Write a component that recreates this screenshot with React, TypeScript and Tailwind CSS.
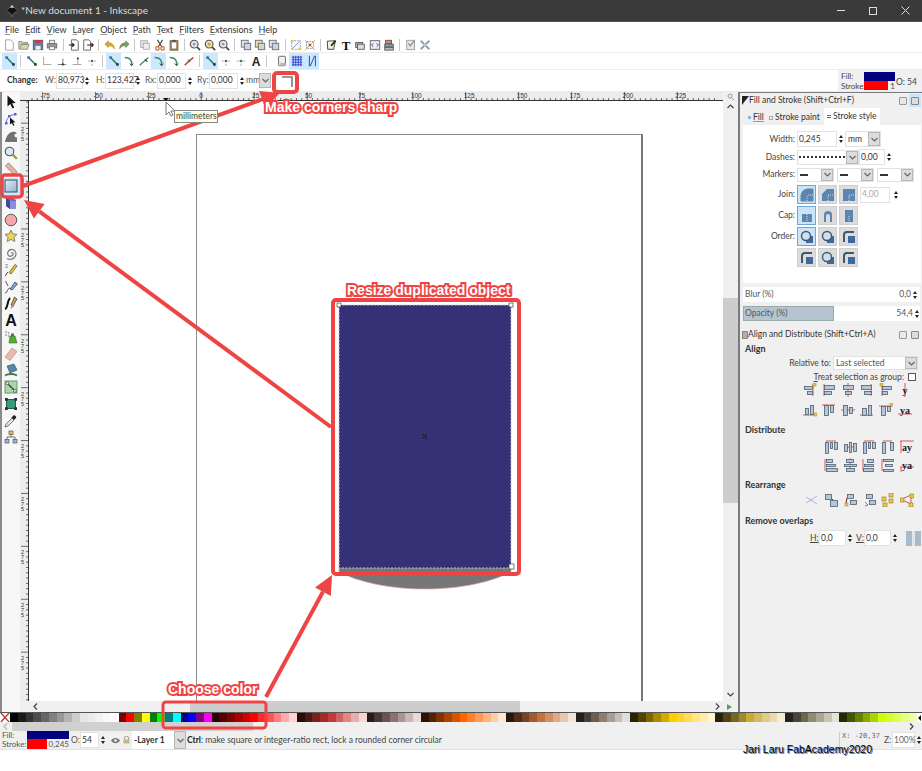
import type { ReactNode } from 'react'

const Svg = ({ s = 14, children }: { s?: number; children: ReactNode }) => (
  <svg width={s} height={s} viewBox="0 0 14 14" className="shrink-0">{children}</svg>
)

const Chevron = ({ dir = 'down', c = '#666' }: { dir?: 'down' | 'up' | 'left' | 'right'; c?: string }) => {
  const d = { down: 'M1.5 3 L4.5 6 L7.5 3', up: 'M1.5 6 L4.5 3 L7.5 6', left: 'M6 1.5 L3 4.5 L6 7.5', right: 'M3 1.5 L6 4.5 L3 7.5' }[dir]
  return <svg width="9" height="9" viewBox="0 0 9 9" className="shrink-0"><path d={d} fill="none" stroke={c} strokeWidth="1.2" /></svg>
}

// file / edit toolbar icons
const tb: Record<string, ReactNode> = {
  new: <path d="M3 1h6l3 3v9H3z" fill="#fff" stroke="#999" />,
  open: <path d="M1 12V3h4l1 1h5v2H4l-2 6h9l2-6H4" fill="#d9d4a8" stroke="#888" />,
  save: <g><rect x="1.5" y="1.5" width="11" height="11" fill="#5b7fb0" stroke="#555" /><rect x="3.5" y="1.5" width="7" height="3" fill="#d33" /><rect x="4" y="8" width="6" height="4.5" fill="#eee" /></g>,
  print: <g><rect x="4" y="1.5" width="6" height="4" fill="#eee" stroke="#777" /><rect x="1.5" y="5.5" width="11" height="5" fill="#999" stroke="#666" /><rect x="4" y="9" width="6" height="3.5" fill="#fff" stroke="#777" /></g>,
  imp: <g><path d="M4 1h6l2 2v10H4z" fill="#fff" stroke="#555" /><path d="M1 7h6M5 5l2 2-2 2" fill="none" stroke="#222" strokeWidth="1.4" /></g>,
  exp: <g><path d="M2 1h6l2 2v10H2z" fill="#fff" stroke="#555" /><path d="M6 7h7M11 5l2 2-2 2" fill="none" stroke="#222" strokeWidth="1.4" /></g>,
  undo: <path d="M1 6l4-4v2.500c4 0 7 2 7 7-1.500-3-4-3.500-7-3.500V10z" fill="#e0a92e" stroke="#a67a12" strokeWidth=".6" />,
  redo: <path d="M13 6L9 2v2.500c-4 0-7 2-7 7 1.500-3 4-3.500 7-3.500V10z" fill="#7f9a63" stroke="#5c7444" strokeWidth=".6" />,
  dup: <g><rect x="2" y="2" width="8" height="8" fill="#e5e5e5" stroke="#aaa" /><rect x="5" y="5" width="7" height="7" fill="#eee" stroke="#aaa" /></g>,
  cut: <g><path d="M4 1l5 8M10 1L5 9" stroke="#444" strokeWidth="1.3" /><circle cx="4" cy="11" r="2" fill="none" stroke="#c46a2b" strokeWidth="1.4" /><circle cx="10" cy="11" r="2" fill="none" stroke="#c46a2b" strokeWidth="1.4" /></g>,
  paste: <g><rect x="2.500" y="2" width="9" height="11" fill="#b58a45" stroke="#555" /><rect x="4.500" y="4" width="5" height="7" fill="#fff" /><rect x="5" y="1" width="4" height="2.500" fill="#555" /></g>,
  zoom: <g><circle cx="6" cy="6" r="4.500" fill="#e4e8ec" stroke="#555" strokeWidth="1.3" /><circle cx="6" cy="6" r="1.500" fill="#999" /><path d="M9.500 9.500L13 13" stroke="#444" strokeWidth="2" /></g>,
  zoom2: <g><circle cx="6" cy="6" r="4.500" fill="#efe7c4" stroke="#555" strokeWidth="1.3" /><circle cx="6" cy="6" r="2" fill="#c9a64a" /><path d="M9.500 9.500L13 13" stroke="#444" strokeWidth="2" /></g>,
  pages: <g><rect x="1.500" y="1.500" width="8" height="8" fill="#dde6ee" stroke="#667" /><rect x="5" y="5" width="7.500" height="7.500" fill="#c9d6e2" stroke="#667" /></g>,
  pages2: <g><rect x="1.500" y="1.500" width="8" height="8" fill="#e8dfa0" stroke="#667" /><rect x="5" y="5" width="7.500" height="7.500" fill="#cfd8c0" stroke="#667" /></g>,
  grp: <g><rect x="2" y="2" width="10" height="10" fill="none" stroke="#889" strokeDasharray="2 1" /><path d="M3 11L11 3" stroke="#5a8ac0" /><rect x="1" y="1" width="3" height="3" fill="#ddc95a" /><rect x="10" y="10" width="3" height="3" fill="#ddc95a" /></g>,
  grp2: <g><rect x="3" y="3" width="8" height="8" fill="none" stroke="#889" strokeDasharray="2 1" /><path d="M1 1l12 12M13 1L1 13" stroke="#c9a64a" /><circle cx="7" cy="7" r="1.500" fill="#c33" /></g>,
  xml: <g><path d="M2 12L1.500 2.500 11 2 9 12z" fill="#f4f1dc" stroke="#333" /><path d="M11 2L6 8" stroke="#222" strokeWidth="2" /></g>,
  text: <text x="7" y="12.500" textAnchor="middle" fontSize="15" fontWeight="700" fontFamily="Liberation Serif, serif" fill="#111">T</text>,
  layers: <g><rect x="2" y="4" width="8" height="6" fill="#bbb" stroke="#555" /><rect x="4" y="6" width="8" height="6" fill="#ddd" stroke="#555" /></g>,
  code: <g><rect x="1.500" y="2" width="11" height="10" fill="#eef" stroke="#556" /><path d="M5 5L3 7l2 2M9 5l2 2-2 2" fill="none" stroke="#333" /></g>,
  objs: <g><rect x="3" y="1.500" width="7" height="4" fill="#d38b6a" stroke="#555" /><rect x="2" y="6" width="10" height="3" fill="#8aa4c0" stroke="#555" /><rect x="2" y="10" width="10" height="3" fill="#bbb" stroke="#555" /></g>,
  doc: <g><rect x="2" y="1.500" width="9" height="11" fill="#e6e6e6" stroke="#999" /><path d="M4 5l2 3 5-6" fill="none" stroke="#6a9a7a" strokeWidth="1.300" /></g>,
  tools: <g><path d="M2 2l10 10M12 2L2 12" stroke="#8aa0b4" strokeWidth="2.200" /><circle cx="7" cy="7" r="2" fill="#bcc8d2" /></g>,
}

// snap bar icons
const sn = (kind: string): ReactNode => {
  if (kind === 'node') return <g><path d="M3 3l8 8" stroke="#2b7a55" strokeWidth="1.800" /><rect x="1.500" y="1.500" width="3" height="3" fill="#3a6fb0" /><rect x="9.500" y="9.500" width="3" height="3" fill="#333" /></g>
  if (kind === 'corner') return <path d="M3 2v9h9" fill="none" stroke="#a8a8a8" strokeWidth="1.200" />
  if (kind === 'cross') return <g><path d="M2 11h10M8 4v7" fill="none" stroke="#888" strokeWidth="1.200" /><circle cx="8" cy="11" r="1.300" fill="#333" /></g>
  if (kind === 'up') return <g><path d="M2 11h10M8 3v8" fill="none" stroke="#aaa" strokeWidth="1.200" /><circle cx="8" cy="4" r="1.200" fill="#333" /></g>
  if (kind === 'dot') return <g><path d="M2 7h3M9 7h3M7 10v3" stroke="#aaa" strokeWidth="1.100" /><circle cx="7" cy="7" r="1.500" fill="#3a7a4a" /></g>
  if (kind === 'curve') return <g><path d="M2 3c6 0 9 3 8 9" fill="none" stroke="#3b8b5b" strokeWidth="1.700" /><path d="M8 10l2 2.500L12 10" fill="none" stroke="#333" /></g>
  if (kind === 'line') return <g><path d="M2 12L12 3" stroke="#3b8b5b" strokeWidth="1.500" /><path d="M8 5l3 3" stroke="#333" strokeWidth="1.200" /></g>
  if (kind === 'bez') return <g><path d="M2 12L7 7l5-4" stroke="#c33" strokeWidth="1.700" fill="none" /><rect x="5.500" y="5.500" width="3" height="3" fill="#3b8b5b" /></g>
  if (kind === 'A') return <text x="7" y="12.500" textAnchor="middle" fontSize="14" fontWeight="700" fontFamily="Liberation Sans, sans-serif" fill="#222">A</text>
  if (kind === 'page') return <g><rect x="3" y="1.500" width="8" height="11" rx="1" fill="#f2f2f2" stroke="#555" /><rect x="5" y="9" width="6" height="3.500" fill="#bbb" /></g>
  if (kind === 'grid') return <path d="M2.500 1v12M5.500 1v12M8.500 1v12M11.500 1v12M1 2.500h12M1 5.500h12M1 8.500h12M1 11.500h12" stroke="#2638d0" strokeWidth="1" />
  return <g><path d="M4 1v12M11 1v12" stroke="#2f64c8" strokeWidth="1.300" /><path d="M5 13L10 1" stroke="#2f64c8" strokeWidth="1.300" /></g>
}

// toolbox icons, drawn in 14-unit boxes
const toolIcons: ReactNode[] = [
  <path d="M3.500 .5v11l2.800-2.500 2.200 4.500 1.800-.9-2.200-4.300 3.600-.3z" fill="#111" />,
  <g><path d="M2 11C3 6 5 3 11 2.500" fill="none" stroke="#6a6af0" strokeWidth="1" /><rect x="1" y="10" width="2.500" height="2.500" fill="#5b5bf0" /><rect x="10" y="1" width="2.500" height="2.500" fill="#5b5bf0" /><rect x="4" y="3" width="2.500" height="2.500" fill="#5b5bf0" /><path d="M6 5.500v7l1.800-1.600 1.500 2.900 1.200-.6-1.500-2.800 2.400-.2z" fill="#111" /></g>,
  <path d="M1 13c1-5 3-9 7-10 2-.5 4 0 5 1.500-2 0-3 1-2.500 2.500.4 1 1.500 1.500 2.500 1.500v4.500z" fill="#6f7470" />,
  <g><circle cx="5.500" cy="5.500" r="4.300" fill="#d7e7f5" stroke="#555" strokeWidth="1.100" /><path d="M8.800 8.800l4 4" stroke="#b68a3a" strokeWidth="2.300" /></g>,
  <path d="M4.500 .8l8.700 9-3 3.200L1.500 4z" fill="#e8b39a" stroke="#777" strokeWidth=".7" />,
  <g><defs><linearGradient id="rectg" x1="0" y1="0" x2="1" y2="1"><stop offset="0" stopColor="#e6eef6" /><stop offset="1" stopColor="#8fb0d0" /></linearGradient></defs><rect x="1" y="1" width="12" height="12" fill="url(#rectg)" stroke="#3c4c5c" strokeWidth="1" /></g>,
  <g><path d="M2 1h6l4 3v9H6l-4-3z" fill="#6a6ac0" /><path d="M6 5h6v8H6z" fill="#8d8de0" /><path d="M2 1l4 4v8l-4-3z" fill="#46469a" /></g>,
  <circle cx="7" cy="7" r="5.800" fill="#f4a6ac" stroke="#5b5b5b" strokeWidth="1" />,
  <path d="M7 1l1.800 3.900 4.200.5-3.100 2.900.9 4.200L7 10.400l-3.800 2.100.9-4.200L1 5.400l4.200-.5z" fill="#efd84f" stroke="#7a8a6a" strokeWidth="1" />,
  <path d="M7 7c1-1 2.500 0 2 1.500S6 11 4.500 9.500 3.500 4 7 3.500s6 3 4.500 6.500-6 4-8.500 2.500" fill="none" stroke="#7f7f7f" strokeWidth="1.300" />,
  <g><path d="M1 13c2-1 1-3 3-4" fill="none" stroke="#555" /><path d="M5 9.500l6-8 2 1.500-6 8z" fill="#ecc233" stroke="#444" strokeWidth=".7" /><text x="1" y="5" fontSize="5" fill="#555">2</text></g>,
  <g><path d="M1 13c3 0 2-5 5-5" fill="none" stroke="#555" /><path d="M6 9l5-7 2.500 2-5.500 6z" fill="#7aa8d8" stroke="#333" strokeWidth=".7" /><path d="M1.500 1L4 6" stroke="#555" /></g>,
  <g><path d="M1 13c3-.5 2-8 5-11" fill="none" stroke="#111" strokeWidth="2" /><path d="M7 9l3.500-8L13 3l-4 7z" fill="#c9a64a" stroke="#333" strokeWidth=".7" /><path d="M7 12l3-3" stroke="#8c7ad0" strokeWidth="1.400" /></g>,
  <text x="7" y="13" textAnchor="middle" fontSize="16" fontWeight="700" fontFamily="Liberation Sans, sans-serif" fill="#111">A</text>,
  <g><path d="M6 6h5l2 7H5z" fill="#58a83a" stroke="#3b6e28" strokeWidth=".6" /><rect x="7" y="3.500" width="3" height="2.500" fill="#666" /><circle cx="2" cy="2" r=".8" fill="#777" /><circle cx="4.500" cy="3" r=".8" fill="#777" /><circle cx="2" cy="5" r=".8" fill="#777" /><circle cx="4.500" cy="6" r=".8" fill="#777" /></g>,
  <path d="M8 1l5 3.500-7 9L1 10z" fill="#f0b7a4" stroke="#999" strokeWidth=".7" />,
  <g><path d="M3 3l7-2 3 6-7 3z" fill="#4f88b0" stroke="#345" strokeWidth=".6" /><path d="M1 12.500c3-2 9-2 12 0" stroke="#3f7a45" strokeWidth="1.800" fill="none" /></g>,
  <g><rect x="1" y="1" width="12" height="12" fill="#a8d8a8" stroke="#6a9a6a" /><path d="M3 3l8 8" stroke="#333" strokeWidth="1.100" /><rect x="2" y="2" width="2.500" height="2.500" fill="#fff" stroke="#333" strokeWidth=".5" /><rect x="9.500" y="9.500" width="2.500" height="2.500" fill="#fff" stroke="#333" strokeWidth=".5" /></g>,
  <g><rect x="2.500" y="2.500" width="9" height="9" fill="#3b9a7a" stroke="#2a5a50" /><rect x="1" y="1" width="2.800" height="2.800" fill="#234" /><rect x="10.200" y="1" width="2.800" height="2.800" fill="#234" /><rect x="1" y="10.200" width="2.800" height="2.800" fill="#234" /><rect x="10.200" y="10.200" width="2.800" height="2.800" fill="#234" /></g>,
  <g><path d="M1 13l1-3 6-6 2 2-6 6z" fill="#dfe8ef" stroke="#555" strokeWidth=".8" /><path d="M7.500 3.500l2-2c1-1 3.500 1.500 2.500 2.500l-2 2z" fill="#222" /></g>,
  <g><rect x="5" y="1" width="4" height="3.500" fill="#f0c040" stroke="#555" strokeWidth=".7" /><rect x="1" y="9.500" width="4" height="3.500" fill="#9ab8d8" stroke="#555" strokeWidth=".7" /><rect x="9" y="9.500" width="4" height="3.500" fill="#9ab8d8" stroke="#555" strokeWidth=".7" /><path d="M7 4.500V7M3 9.500V7h8v2.500" fill="none" stroke="#555" strokeWidth=".8" /></g>,
]

// align & distribute icons: [x,y,w,h] bars, [x1,y1,x2,y2] red lines and yellow anchors
type Mini = { b: number[][]; l?: number[][]; y?: number[]; t?: string; ys?: number[][]; c?: string }
const MiniIcon = ({ m }: { m: Mini }) => (
  <Svg>
    {m.l?.map((v, i) => <line key={i} x1={v[0]} y1={v[1]} x2={v[2]} y2={v[3]} stroke={m.c ?? '#e05555'} strokeWidth="1" />)}
    {m.b.map((v, i) => <rect key={i} x={v[0] + 0.5} y={v[1] + 0.5} width={v[2]} height={v[3]} fill="#b4c6d8" stroke="#4f5f6f" strokeWidth=".8" />)}
    {m.y && <rect x={m.y[0]} y={m.y[1]} width="3" height="3" fill="#f0c83c" stroke="#a0801c" strokeWidth=".5" />}
    {m.ys?.map((v, i) => <rect key={i} x={v[0]} y={v[1]} width="4" height="4" fill="#f0c83c" stroke="#8a7a2c" strokeWidth=".6" />)}
    {m.t && <text x="7" y="11" textAnchor="middle" fontSize="10" fontWeight="700" fontFamily="Liberation Serif, serif" fill="#222">{m.t}</text>}
  </Svg>
)

const alignRow1: Mini[] = [
  { b: [[1, 3, 8, 3], [4, 8, 5, 3]], l: [[10, 1, 10, 13]], y: [10, 0] },
  { b: [[2, 2, 10, 4], [2, 8, 7, 3]], l: [[2, 1, 2, 13]] },
  { b: [[2, 2, 10, 4], [4, 8, 6, 3]], l: [[7, 0, 7, 14]] },
  { b: [[1, 2, 10, 4], [4, 8, 7, 3]], l: [[11, 1, 11, 13]] },
  { b: [[3, 3, 9, 3], [3, 8, 5, 3]], l: [[3, 1, 3, 13]], y: [1, 0] },
  { b: [], t: 'y', l: [[7, 0, 7, 14]] },
]
const alignRow2: Mini[] = [
  { b: [[2, 5, 3, 6], [7, 2, 3, 9]], l: [[0, 12, 13, 12]], y: [11, 10] },
  { b: [[2, 2, 4, 10], [8, 2, 3, 7]], l: [[0, 2, 13, 2]] },
  { b: [[2, 2, 4, 10], [8, 4, 3, 6]], l: [[0, 7, 14, 7]] },
  { b: [[2, 5, 4, 7], [8, 2, 3, 10]], l: [[0, 12, 13, 12]] },
  { b: [[2, 3, 4, 9], [8, 3, 3, 5]], l: [[0, 3, 13, 3]], y: [11, 0] },
  { b: [], t: 'ya', l: [[0, 11, 14, 11]] },
]
const distRow1: Mini[] = [
  { b: [[1, 2, 3, 11], [6, 2, 2, 6], [10, 2, 3, 7]], l: [[2, 1, 12, 1]] },
  { b: [[1, 4, 3, 7], [6, 2, 2, 10], [10, 3, 3, 8]], l: [[2, 7, 12, 7]] },
  { b: [[1, 2, 3, 11], [6, 2, 2, 6], [10, 2, 3, 6]], l: [[2, 1, 12, 1]] },
  { b: [[1, 2, 3, 11], [9, 2, 3, 8]], l: [[2, 1, 11, 1]] },
  { b: [], t: 'ay', l: [[0, 1, 14, 1], [1, 1, 1, 13]] },
]
const distRow2: Mini[] = [
  { b: [[2, 1, 6, 3], [2, 6, 9, 2], [2, 10, 11, 3]], l: [[1, 1, 1, 13]] },
  { b: [[3, 1, 7, 3], [1, 6, 12, 2], [3, 10, 8, 3]], l: [[7, 0, 7, 14]] },
  { b: [[5, 1, 6, 3], [2, 6, 9, 2], [1, 10, 10, 3]], l: [[1, 1, 1, 13]] },
  { b: [[2, 1, 10, 2], [4, 6, 7, 2], [2, 11, 10, 2]], l: [[1, 1, 1, 13]] },
  { b: [], t: 'ya', l: [[0, 9, 14, 9], [1, 9, 1, 14]] },
]
const rearrange: Mini[] = [
  { b: [], c: '#a9b4e6', l: [[1, 4, 6, 7], [6, 7, 1, 10], [6, 7, 12, 3], [6, 7, 12, 11]] },
  { b: [[1, 1, 6, 5], [6, 7, 7, 6]], l: [[6, 4, 9, 7]], c: '#333' },
  { b: [[4, 1, 6, 4], [7, 7, 6, 4]], y: [2, 10], l: [[4, 5, 3, 10]], c: '#7a1a1a' },
  { b: [[4, 1, 6, 4], [7, 7, 6, 4]], l: [[3, 9, 6, 12], [6, 12, 3, 13]] },
  { b: [], ys: [[8, 0], [1, 4], [8, 6], [2, 10]] },
  { b: [], ys: [[0, 5], [10, 1], [9, 10]], l: [[2, 6, 11, 2], [2, 7, 11, 11], [11, 3, 11, 11]] },
]

const reds = ['000000', '1a1a1a', '333333', '4d4d4d', '666666', '808080', '999999', 'b3b3b3', 'cccccc', 'e6e6e6', 'ececec', 'f2f2f2', 'f9f9f9', 'ffffff', '800000', 'ff0000', '808000', 'ffff00', '008000', '00ff00', '008080', '00ffff', '000080', '0000ff', '800080', 'ff00ff', '2b0000', '550000', '800000', 'aa0000', 'd40000', 'ff0000', 'ff2a2a', 'ff5555', 'ff8080', 'ffaaaa', 'ffd5d5', '280b0b', '501616', '782121', 'a02c2c', 'c83737', 'd35f5f', 'de8787', 'e9afaf', 'f4d7d7', '241c1c', '483737', '6c5353', '916f6f', 'ac9393', 'c8b7b7', 'e3dbdb', '2b1100', '552200', '803300', 'aa4400', 'd45500', 'ff6600', 'ff7f2a', 'ff9955', 'ffb380', 'ffccaa', 'ffe6d5', '28170b', '502d16', '784421', 'a05a2c', 'c87137', 'd38d5f', 'deaa87', 'e9c6af', 'f4e3d7', '241f1c', '483e37', '6c5d53', '917c6f', 'ac9d93', 'c8beb7', 'e3dedb', '2b2200', '554400', '806600', 'aa8800', 'd4aa00', 'ffcc00', 'ffd42a', 'ffdd55', 'ffe680', 'ffeeaa', 'fff6d5', '28220b', '504416', '786721', 'a0892c', 'c8ab37', 'd3bc5f', 'decd87', 'e9ddaf', 'f4eed7', '24221c', '484537', '6c6753', '918a6f', 'aca793', 'c8c4b7', 'e3e2db', '222b00', '445500', '668000', '88aa00', 'aad400', 'ccff00', 'd4ff2a', 'ddff55', 'e5ff80', 'eeffaa']

const Sep = () => <div className="w-px h-[12px] bg-[#c8c8c8] mx-[3px] shrink-0" />

const Spin = () => (
  <div className="flex flex-col items-center justify-center w-[7px] shrink-0 gap-[2px]">
    <div className="w-0 h-0 border-x-[2.5px] border-x-transparent border-b-[3px] border-b-[#222]" />
    <div className="w-0 h-0 border-x-[2.5px] border-x-transparent border-t-[3px] border-t-[#222]" />
  </div>
)

const Field = ({ v, w, c = 'text-[#333]' }: { v: string; w: string; c?: string }) => (
  <div className={`${w} ${c} h-[16px] bg-white border border-[#e2e2e2] flex items-center pl-[1px] text-[8.5px] shrink-0 whitespace-nowrap`}>{v}</div>
)

const ChevBox = () => (
  <div className="w-[12px] h-full bg-[#dcdcdc] border border-[#b8b8b8] flex items-center justify-center shrink-0"><Chevron /></div>
)

const Marker = () => (
  <div className="w-[37px] h-[14px] flex items-center bg-white border border-[#e2e2e2]">
    <div className="w-[8px] h-[2px] bg-[#333] ml-[2px]" />
    <div className="ml-auto h-full"><ChevBox /></div>
  </div>
)

const JoinBtn = ({ on, d }: { on?: boolean; d: ReactNode }) => (
  <div className={`w-[19px] h-[19px] flex items-center justify-center border ${on ? 'bg-[#cce4f7] border-[#6fa8dc]' : 'bg-[#dcdcdc] border-[#cfcfcf]'}`}>
    <Svg>{d}</Svg>
  </div>
)

const joinD = {
  round: <g><path d="M1 13V8a7 7 0 0 1 7-7h5v12z" fill="#5b86b4" stroke="#5b86b4" /><path d="M7 13V9a2 2 0 0 1 2-2h4" fill="none" stroke="#ddd" strokeDasharray="1 1" /></g>,
  bevel: <g><path d="M1 13V6l5-5h7v12z" fill="#5b86b4" /><path d="M7 13V7h6" fill="none" stroke="#ddd" strokeDasharray="1 1" /></g>,
  miter: <g><path d="M1 13V1h12v12z" fill="#5b86b4" /><path d="M7 13V7h6" fill="none" stroke="#ddd" strokeDasharray="1 1" /></g>,
  butt: <g><rect x="2" y="5" width="10" height="8" fill="#5b86b4" /><path d="M7 5v8" stroke="#ddd" strokeDasharray="1 1" /></g>,
  rcap: <path d="M3 13V6a4 4 0 0 1 8 0v7h-2V7a2 2 0 0 0-4 0v6z" fill="#5b86b4" />,
  scap: <g><rect x="3" y="1" width="8" height="12" fill="#5b86b4" /><path d="M7 7v6" stroke="#ddd" strokeDasharray="1 1" /></g>,
}
const order = (a: string, b: string, c: string) => (
  <g>
    <rect x="6" y="6" width="7" height="7" fill={c} />
    <circle cx="6" cy="6" r="4.500" fill={a} stroke={b} strokeWidth="1.400" />
  </g>
)
const orderOut = <g><path d="M2 12V5a3 3 0 0 1 3-3h7" fill="none" stroke="#44566a" strokeWidth="2" /><rect x="6" y="6" width="7" height="7" fill="#3d6a9e" /></g>

const PanelHead = ({ t, active, glyph }: { t: string; active?: boolean; glyph: ReactNode }) => (
  <div className="flex items-center h-[15px] text-[8.5px] text-[#333]">
    {glyph}
    <span className="whitespace-nowrap">{t}</span>
    <div className="ml-auto flex items-center gap-[2px]">
      <div className="w-[8px] h-[8px] border border-[#999] bg-[#e8e8e8] rounded-[1px]" />
      <div className={`w-[12px] h-[13px] flex items-center justify-center ${active ? 'bg-[#cce4f7]' : ''}`}>
        <div className="w-[8px] h-[8px] border border-[#888] bg-[#ddd] rounded-[1px]" />
      </div>
    </div>
  </div>
)

const Labeled = ({ t, children, h = 'h-[18px]' }: { t: string; children: ReactNode; h?: string }) => (
  <div className={`flex items-center ${h}`}>
    <div className="w-[52px] text-right text-[8.5px] text-[#444] shrink-0">{t}</div>
    <div className="ml-[2px] flex items-center">{children}</div>
  </div>
)

const ToolRow = ({ items }: { items: (string | null)[] }) => (
  <div className="flex items-center h-[15px] pl-[2px] border-b border-[#ececec]">
    {items.map((k, i) => k ? <div key={i} className="w-[14.4px] flex justify-center"><Svg s={12}>{tb[k]}</Svg></div> : <Sep key={i} />)}
  </div>
)

const SnapBtn = ({ k, on }: { k: string; on?: boolean }) => (
  <div className={`w-[15px] h-[16px] flex items-center justify-center shrink-0 ${on ? 'bg-[#cce8ff]' : ''}`}><Svg s={12}>{sn(k)}</Svg></div>
)

// ruler drawings
const HRuler = () => {
  const labels = ['-75', '-50', '-25', '0', '25', '50', '75', '100', '125', '150', '175', '200', '225']
  const ticks = Array.from({ length: 130 }, (_, i) => 12 + i * 5.29)
  return (
    <svg width="703" height="9" className="block">
      <rect width="703" height="9" fill="#ececec" />
      {ticks.map((x, i) => <line key={i} x1={x} x2={x} y1={i % 10 === 2 ? 0 : 6} y2="9" stroke="#333" strokeWidth=".7" />)}
      {labels.map((l, i) => <text key={l} x={20.500 + i * 52.9} y="6" fontSize="6.500" fill="#333" fontFamily="Liberation Sans, sans-serif">{l}</text>)}
      <line x1="0" x2="703" y1="8.600" y2="8.600" stroke="#222" />
      <path d="M143 6h6l-3 3z" fill="#111" />
    </svg>
  )
}
const VRuler = () => {
  const ticks = Array.from({ length: 116 }, (_, i) => i * 5.29 + 1)
  const labels = ['2', '7', '5']
  return (
    <svg width="9" height="600" className="block">
      <rect width="9" height="600" fill="#ececec" />
      {ticks.map((y, i) => <line key={i} y1={y} y2={y} x1={i % 10 === 4 ? 1 : 6} x2="9" stroke="#333" strokeWidth=".7" />)}
      {Array.from({ length: 11 }, (_, i) => (
        <g key={i}>
          {labels.map((c, j) => <text key={j} x="1" y={30 + i * 52.9 + j * 5} fontSize="5.500" fill="#333" fontFamily="Liberation Sans, sans-serif">{c}</text>)}
        </g>
      ))}
      <line x1="8.600" x2="8.600" y1="0" y2="600" stroke="#222" />
    </svg>
  )
}

const Arrow = ({ x1, y1, x2, y2, w = 4, hl = 19, hw = 9 }: { x1: number; y1: number; x2: number; y2: number; w?: number; hl?: number; hw?: number }) => {
  const a = Math.atan2(y2 - y1, x2 - x1)
  const bx = x2 - Math.cos(a) * hl
  const by = y2 - Math.sin(a) * hl
  const nx = -Math.sin(a) * hw
  const ny = Math.cos(a) * hw
  return (
    <g>
      <line x1={x1} y1={y1} x2={bx} y2={by} stroke="#ef4444" strokeWidth={w} />
      <polygon points={`${x2},${y2} ${bx + nx},${by + ny} ${bx - nx},${by - ny}`} fill="#ef4444" />
    </g>
  )
}

const noteText = "font-['Liberation_Sans',sans-serif] font-bold text-white whitespace-nowrap [-webkit-text-stroke:4px_#ef4444] [paint-order:stroke_fill] absolute text-[14px] leading-none"

export default function App() {
  return (
    <div className="relative w-[922px] h-[771px] bg-white overflow-hidden flex flex-col font-['Lato',sans-serif] select-none">
      {/* title bar */}
      <div className="h-[22px] bg-[#3a3a3a] border-b border-[#555] flex items-center shrink-0 text-[#dcdcdc]">
        <svg width="14" height="14" viewBox="0 0 14 14" className="ml-[5px]">
          <path d="M7 1L2 6c-1 1-.5 2 .5 2H4l1 2h1l1 3 1-3h1l1-2h1.500c1 0 1.500-1 .5-2z" fill="#111" stroke="#888" strokeWidth=".5" />
          <path d="M7 1L5 4l2-.5L9 4z" fill="#eee" />
        </svg>
        <span className="ml-[2px] text-[10px]">*New document 1 - Inkscape</span>
        <div className="ml-auto flex items-center">
          <div className="w-[32px] flex justify-center"><div className="w-[8px] h-px bg-[#ddd]" /></div>
          <div className="w-[32px] flex justify-center"><div className="w-[8px] h-[8px] border border-[#ddd]" /></div>
          <div className="w-[33px] flex justify-center">
            <svg width="9" height="9" viewBox="0 0 9 9"><path d="M.5.5l8 8M8.500.5l-8 8" stroke="#ddd" /></svg>
          </div>
        </div>
      </div>

      {/* menu */}
      <div className="h-[16px] flex items-center pl-[5px] gap-[6px] text-[9px] text-[#333] bg-white shrink-0">
        {['File', 'Edit', 'View', 'Layer', 'Object', 'Path', 'Text', 'Filters', 'Extensions', 'Help'].map(m => (
          <span key={m}><span className="underline decoration-[#999]">{m[0]}</span>{m.slice(1)}</span>
        ))}
      </div>

      {/* file toolbar */}
      <ToolRow items={['new', 'open', 'save', 'print', null, 'imp', 'exp', null, 'undo', 'redo', null, 'dup', 'cut', 'paste', null, 'zoom', 'zoom2', 'zoom', null, 'pages', 'pages2', 'pages', null, 'grp', 'grp2', null, 'xml', 'text', 'layers', 'code', 'objs', null, 'doc', 'tools']} />

      {/* snap bar */}
      <div className="h-[17px] flex items-center pl-[2px] border-b border-[#ececec] shrink-0">
        <SnapBtn k="node" on /><Sep />
        <SnapBtn k="node" /><SnapBtn k="corner" /><SnapBtn k="cross" /><SnapBtn k="up" /><SnapBtn k="dot" /><Sep />
        <SnapBtn k="node" on /><SnapBtn k="curve" /><SnapBtn k="line" /><SnapBtn k="curve" on /><SnapBtn k="curve" /><SnapBtn k="bez" /><Sep />
        <SnapBtn k="node" on /><SnapBtn k="dot" /><SnapBtn k="dot" /><SnapBtn k="A" /><Sep />
        <div className="w-[4px]" />
        <SnapBtn k="page" /><SnapBtn k="grid" on /><SnapBtn k="guide" on />
      </div>

      {/* tool controls */}
      <div className="h-[22px] flex items-center border-b border-[#ececec] shrink-0 relative text-[8.5px] text-[#555]">
        <span className="ml-[7px] w-[38px] font-bold text-[#333]">Change:</span>
        <span className="w-[11px]">W:</span><Field v="80,973" w="w-[27px]" /><Spin />
        <span className="ml-[6px] w-[9px]">H:</span><Field v="123,427" w="w-[29px]" /><Spin />
        <span className="ml-[4px] w-[12px]">Rx:</span><Field v="0,000" w="w-[29px]" /><Spin />
        <span className="ml-[4px] w-[12px]">Ry:</span><Field v="0,000" w="w-[29px]" /><Spin />
        <div className="ml-[1px] h-[15px] flex items-center">
          <span className="w-[13px] bg-white">mm</span>
          <div className="h-full"><ChevBox /></div>
        </div>
        <svg width="14" height="14" viewBox="0 0 14 14" className="ml-[10px]"><path d="M1 3h10v10" fill="none" stroke="#777" strokeWidth="1.600" /></svg>
        <div className="ml-auto w-[84px] h-full bg-[#f0f0f0] flex text-[8px] text-[#444]">
          <div className="w-[26px] pl-[3px] leading-[10px] pt-[1px]">Fill:<br />Stroke:</div>
          <div className="flex flex-col w-[31px] pt-[2px]">
            <div className="h-[9px] bg-[#000080]" />
            <div className="flex items-center h-[9px]"><div className="w-[25px] h-full bg-[#ff0000]" /><span className="ml-[2px]">1</span></div>
          </div>
          <span className="ml-[1px] pt-[6px] whitespace-nowrap text-[8.5px]">O: 54</span>
        </div>
      </div>

      {/* workspace + docks */}
      <div className="flex h-[620px] shrink-0">
        <div className="w-[20px] shrink-0 bg-[#f7f7f7] border-l-2 border-[#8a8a8a] flex flex-col items-center pt-[2px]">
          {toolIcons.map((ic, i) => (
            <div key={i} className={`w-[17px] h-[16.75px] flex items-center justify-center shrink-0 ${i === 5 ? 'bg-[#cce8ff]' : ''}`}><Svg>{ic}</Svg></div>
          ))}
        </div>
        <div className="w-[718px] shrink-0 flex flex-col">
          <div className="h-[9px] flex shrink-0">
            <div className="w-[703px]"><HRuler /></div>
            <div className="flex-1 bg-[#f0f0f0] flex justify-center items-center">
              <svg width="7" height="7" viewBox="0 0 7 7"><circle cx="3" cy="3" r="2" fill="none" stroke="#999" /><path d="M4.500 4.500L7 7" stroke="#999" /></svg>
            </div>
          </div>
          <div className="flex h-[600px] shrink-0">
            <div className="w-[9px] shrink-0 overflow-hidden"><VRuler /></div>
            {/* drawing canvas */}
            <div className="relative w-[694px] shrink-0 bg-white overflow-hidden">
              <div className="absolute left-[167px] top-[33px] w-[447px] h-[600px] bg-white border-l border-t border-[#8c8c8c] border-r-2 border-r-[#777]" />
              <svg width="180" height="292" viewBox="0 0 180 292" className="absolute left-[306px] top-[200px]">
                <path d="M4 264h172v7c-20 10-50 17-86 17s-66-7-86-17z" fill="#777" stroke="#e8a0a0" strokeWidth=".7" />
                <rect x="4" y="4" width="172" height="263" fill="#343176" stroke="#c9c6dd" strokeWidth="1" strokeDasharray="2 1.500" />
                <rect x="2" y="2" width="4" height="4" fill="#fff" stroke="#444" strokeWidth=".7" />
                <rect x="174" y="2" width="4" height="4" fill="#fff" stroke="#444" strokeWidth=".7" />
                <rect x="174" y="263" width="5" height="5" fill="#fff" stroke="#444" strokeWidth=".7" />
                <path d="M87 133l5 5M92 133l-5 5" stroke="#111" strokeWidth=".8" />
              </svg>
            </div>
            <div className="w-[15px] shrink-0 bg-[#f0f0f0] flex flex-col items-center">
              <div className="mt-[1px]"><Chevron dir="up" c="#444" /></div>
              <div className="mt-[187px] w-full h-[205px] bg-[#cdcdcd]" />
              <div className="mt-auto mb-[2px]"><Chevron c="#444" /></div>
            </div>
          </div>
          <div className="h-[11px] flex items-center bg-[#f0f0f0] shrink-0 relative">
            <div className="ml-[11px]"><Chevron dir="left" c="#444" /></div>
            <div className="ml-[150px] w-[330px] h-full bg-[#cdcdcd]" />
            <div className="ml-auto mr-[16px]"><Chevron dir="right" c="#444" /></div>
            <div className="absolute right-[6px] top-[3px] w-0 h-0 border-y-[3px] border-y-transparent border-l-[5px] border-l-[#5f9a70]" />
          </div>
        </div>

        {/* docks */}
        <div className="flex-1 bg-[#f0f0f0] border-l-2 border-t border-[#7a7a7a] flex flex-col min-w-0 pl-[2px] pr-[1px] text-[#333]">
          <PanelHead t="Fill and Stroke (Shift+Ctrl+F)" active glyph={<svg width="7" height="9" viewBox="0 0 7 9" className="shrink-0"><path d="M0 9V0h7L3 5z" fill="#222" /></svg>} />
          <div className="flex items-end h-[17px] pl-[2px] text-[8.5px] text-[#333]">
            <div className="w-[23px] h-[15px] flex items-center gap-[2px] pl-[4px]"><div className="w-[3px] h-[3px] bg-[#8fb4dc]" /><span className="underline decoration-[#999]">Fill</span></div>
            <div className="w-[57px] h-[15px] flex items-center gap-[2px] pl-[2px] whitespace-nowrap"><div className="w-[4px] h-[4px] border border-[#aaa]" /><span>Stroke paint</span></div>
            <div className="w-[56px] h-[17px] bg-white flex items-center gap-[2px] pl-[3px] whitespace-nowrap"><div className="w-[4px] h-[3px] border-y border-[#666]" /><span>Stroke style</span></div>
          </div>
          <div className="bg-white h-[158px] flex flex-col pt-[5px] shrink-0 ml-[1px]">
            <Labeled t="Width:">
              <Field v="0,245" w="w-[40px]" />
              <Spin />
              <div className="ml-[1px] h-[16px] w-[36px] border border-[#e2e2e2] flex items-center text-[8.5px] pl-[2px]">mm<div className="ml-auto h-full"><ChevBox /></div></div>
            </Labeled>
            <Labeled t="Dashes:">
              <div className="h-[15px] w-[62px] border border-[#e2e2e2] flex items-center pl-[1px]"><div className="flex-1 border-t-2 border-dotted border-[#333] mr-[1px]" /><ChevBox /></div>
              <Field v="0,00" w="w-[26px]" />
              <Spin />
            </Labeled>
            <Labeled t="Markers:" h="h-[17px]">
              <div className="flex gap-[3px]"><Marker /><Marker /><Marker /></div>
            </Labeled>
            <div className="mt-[2px] flex flex-col gap-[2px]">
              <Labeled t="Join:" h="h-[19px]">
                <div className="flex items-center gap-[2px]">
                  <JoinBtn on d={joinD.round} /><JoinBtn d={joinD.bevel} /><JoinBtn d={joinD.miter} />
                  <Field v="4,00" w="w-[30px]" c="text-[#aaa]" /><Spin />
                </div>
              </Labeled>
              <Labeled t="Cap:" h="h-[19px]">
                <div className="flex gap-[2px]"><JoinBtn on d={joinD.butt} /><JoinBtn d={joinD.rcap} /><JoinBtn d={joinD.scap} /></div>
              </Labeled>
              <Labeled t="Order:" h="h-[19px]">
                <div className="flex gap-[2px]">
                  <JoinBtn on d={order('#cfe0ee', '#44566a', '#3d6a9e')} />
                  <JoinBtn d={order('#cfe0ee', '#44566a', '#3d6a9e')} />
                  <JoinBtn d={orderOut} />
                </div>
              </Labeled>
              <div className="flex items-center h-[19px] pl-[54px] gap-[2px]">
                <JoinBtn d={orderOut} />
                <JoinBtn d={order('#cfe0ee', '#44566a', '#3d6a9e')} />
                <JoinBtn d={orderOut} />
              </div>
            </div>
          </div>
          <div className="h-[15px] mt-[4px] ml-[1px] mr-[1px] bg-white flex items-center text-[8.5px] px-[2px] text-[#555]">
            Blur (%)<span className="ml-auto">0,0</span><Spin />
          </div>
          <div className="h-[15px] mt-[4px] ml-[1px] mr-[1px] bg-white flex items-center text-[8.5px] relative text-[#555]">
            <div className="absolute left-0 top-0 bottom-0 w-[91px] bg-[#b6c4cf] border border-[#9aa]" />
            <span className="relative ml-[2px]">Opacity (%)</span><span className="relative ml-auto">54,4</span><Spin />
          </div>

          <div className="mt-[6px] -ml-[2px] pl-[2px]">
            <PanelHead t="Align and Distribute (Shift+Ctrl+A)" glyph={<div className="w-[6px] h-[8px] bg-[#b9a8b8] border border-[#887] shrink-0" />} />
          </div>
          <div className="flex flex-col text-[8.5px] pl-[3px]">
            <div className="font-bold text-[9px] h-[14px] leading-[14px]">Align</div>
            <div className="h-[14px] flex items-center justify-end pr-[3px]">
              <span className="text-[#444] whitespace-nowrap">Relative to:</span>
              <div className="ml-[2px] w-[85px] h-[14px] bg-white border border-[#e2e2e2] flex items-center pl-[2px] text-[#555] whitespace-nowrap">Last selected<div className="ml-auto h-full"><ChevBox /></div></div>
            </div>
            <div className="h-[12px] mt-[1px] flex items-center justify-end pr-[5px]">
              <span className="whitespace-nowrap text-[#444]"><span className="underline">T</span>reat selection as group:</span>
              <div className="ml-[4px] w-[8px] h-[8px] border border-[#555] bg-white" />
            </div>
            <div className="h-[14px] flex items-center pl-[58px] gap-[5px]">{alignRow1.map((m, i) => <MiniIcon key={i} m={m} />)}</div>
            <div className="h-[14px] mt-[6px] flex items-center pl-[58px] gap-[5px]">{alignRow2.map((m, i) => <MiniIcon key={i} m={m} />)}</div>
            <div className="font-bold text-[9px] h-[14px] leading-[14px] mt-[6px]">Distribute</div>
            <div className="h-[14px] mt-[3px] flex items-center pl-[79px] gap-[5px]">{distRow1.map((m, i) => <MiniIcon key={i} m={m} />)}</div>
            <div className="h-[14px] mt-[4px] flex items-center pl-[79px] gap-[5px]">{distRow2.map((m, i) => <MiniIcon key={i} m={m} />)}</div>
            <div className="font-bold text-[9px] h-[14px] leading-[14px] mt-[6px]">Rearrange</div>
            <div className="h-[14px] mt-[1px] flex items-center pl-[60px] gap-[5px]">{rearrange.map((m, i) => <MiniIcon key={i} m={m} />)}</div>
            <div className="font-bold text-[9px] h-[14px] leading-[14px] mt-[7px]">Remove overlaps</div>
            <div className="h-[16px] flex items-center pl-[65px] mt-[2px] text-[#444]">
              <span className="underline w-[9px]">H:</span><Field v="0,0" w="w-[27px]" /><Spin />
              <span className="ml-[3px] underline w-[8px]">V:</span><Field v="0,0" w="w-[27px]" /><Spin />
              <div className="ml-[8px] w-[15px] h-[15px] bg-[#a9bac8] flex justify-center"><div className="w-[3px] h-full bg-[#dfe6ec]" /></div>
            </div>
          </div>
        </div>
      </div>

      {/* palette */}
      <div className="h-[10px] flex shrink-0 border-t border-[#555] bg-white">
        <svg width="10" height="9" viewBox="0 0 10 9" className="shrink-0"><path d="M1 0l8 9M9 0L1 9" stroke="#b33" strokeWidth="1.300" /></svg>
        <div className="flex flex-1 min-w-0">
          {reds.map((c, i) => <div key={i} className="flex-1" style={{ background: `#${c}` }} />)}
        </div>
        <div className="w-[5px] flex items-center justify-center"><div className="w-0 h-0 border-y-[3px] border-y-transparent border-r-[3px] border-r-[#111]" /></div>
      </div>

      {/* palette scroll */}
      <div className="h-[9px] flex items-center bg-[#f0f0f0] shrink-0">
        <div className="ml-[1px] w-[11px]"><Chevron dir="left" c="#bbb" /></div>
        <div className="w-[241px] h-full bg-[#d0d0d0]" />
        <div className="ml-auto mr-[6px]"><Chevron dir="right" c="#444" /></div>
      </div>

      {/* status */}
      <div className="h-[19px] flex items-center bg-[#f0f0f0] border-b border-[#e2e2e2] shrink-0 text-[8.5px] text-[#555]">
        <div className="w-[27px] pl-[2px] leading-[9px] text-[8px]">Fill:<br />Stroke:</div>
        <div className="w-[42px] flex flex-col h-full">
          <div className="h-[9px] bg-[#000080]" />
          <div className="h-[10px] flex items-center"><div className="w-[22px] h-full bg-[#ff0000]" /><span className="ml-[2px] text-[8px]">0,245</span></div>
        </div>
        <span className="ml-[2px] w-[9px]">O:</span>
        <Field v="54" w="w-[19px]" /><Spin />
        <svg width="9" height="7" viewBox="0 0 9 7" className="ml-[5px]"><path d="M0 3.500C2 0 7 0 9 3.500 7 7 2 7 0 3.500z" fill="#777" /><circle cx="4.500" cy="3.500" r="1.300" fill="#fff" /></svg>
        <svg width="7" height="8" viewBox="0 0 7 8" className="ml-[3px]"><rect x="0.500" y="3.500" width="6" height="4" fill="#c9b67a" /><path d="M1.500 3.500V2a2 2 0 0 1 4 0v1.500" fill="none" stroke="#999" /></svg>
        <div className="ml-[2px] w-[54px] h-full bg-white flex items-center pl-[2px] font-bold text-[#333] whitespace-nowrap">-Layer 1<div className="ml-auto h-full"><ChevBox /></div></div>
        <span className="ml-[1px] text-[#444] whitespace-nowrap"><b className="text-[#222]">Ctrl</b>: make square or integer-ratio rect, lock a rounded corner circular</span>
        <div className="ml-auto flex items-center h-full">
          <div className="w-[44px] h-[16px] border-l border-[#ccc] pl-[2px] text-[7px] leading-[8px] font-['DejaVu_Sans_Mono',monospace] whitespace-pre text-[#666]">{'X: -20,37'}</div>
          <span className="ml-[1px] w-[8px]">Z:</span>
          <Field v="100%" w="w-[23px]" c="text-[#666]" /><Spin />
        </div>
      </div>
      <div className="flex-1 bg-white" />

      {/* annotations laid over the screenshot */}
      <svg width="922" height="771" className="absolute inset-0 pointer-events-none">
        <rect x="274" y="73" width="23" height="19" rx="3" fill="none" stroke="#ef4444" strokeWidth="4" />
        <rect x="2" y="175" width="20" height="22" rx="3" fill="none" stroke="#ef4444" strokeWidth="3.500" />
        <rect x="333" y="300" width="186" height="274" rx="3" fill="none" stroke="#ef4444" strokeWidth="4" />
        <rect x="163" y="702" width="103" height="26" rx="3" fill="none" stroke="#ef4444" strokeWidth="3" />
        <Arrow x1={23} y1={186} x2={280} y2={93} />
        <Arrow x1={331} y1={427} x2={24} y2={200} />
        <Arrow x1={266} y1={697} x2={332} y2={575} />
        <path d="M166 102v13l3-3 2 4 2-1-2-4h4z" fill="#fff" stroke="#555" strokeWidth=".8" />
      </svg>
      <div className="absolute left-[174px] top-[110px] w-[44px] h-[13px] bg-[#ffffe1] border border-[#888] text-[8.5px] leading-[11px] pl-[1px] text-[#444] overflow-hidden whitespace-nowrap">millimeters</div>
      <div className={`${noteText} left-[265px] top-[100px]`}>Make corners sharp</div>
      <div className={`${noteText} left-[347px] top-[283px]`}>Resize duplicated object</div>
      <div className={`${noteText} left-[168px] top-[682px]`}>Choose color</div>
      <div className="absolute left-[743px] top-[744px] text-[10.5px] leading-none text-black whitespace-nowrap [text-shadow:1px_1px_0_#5a6ab0] font-['Liberation_Sans',sans-serif]">Jari Laru FabAcademy2020</div>
    </div>
  )
}
